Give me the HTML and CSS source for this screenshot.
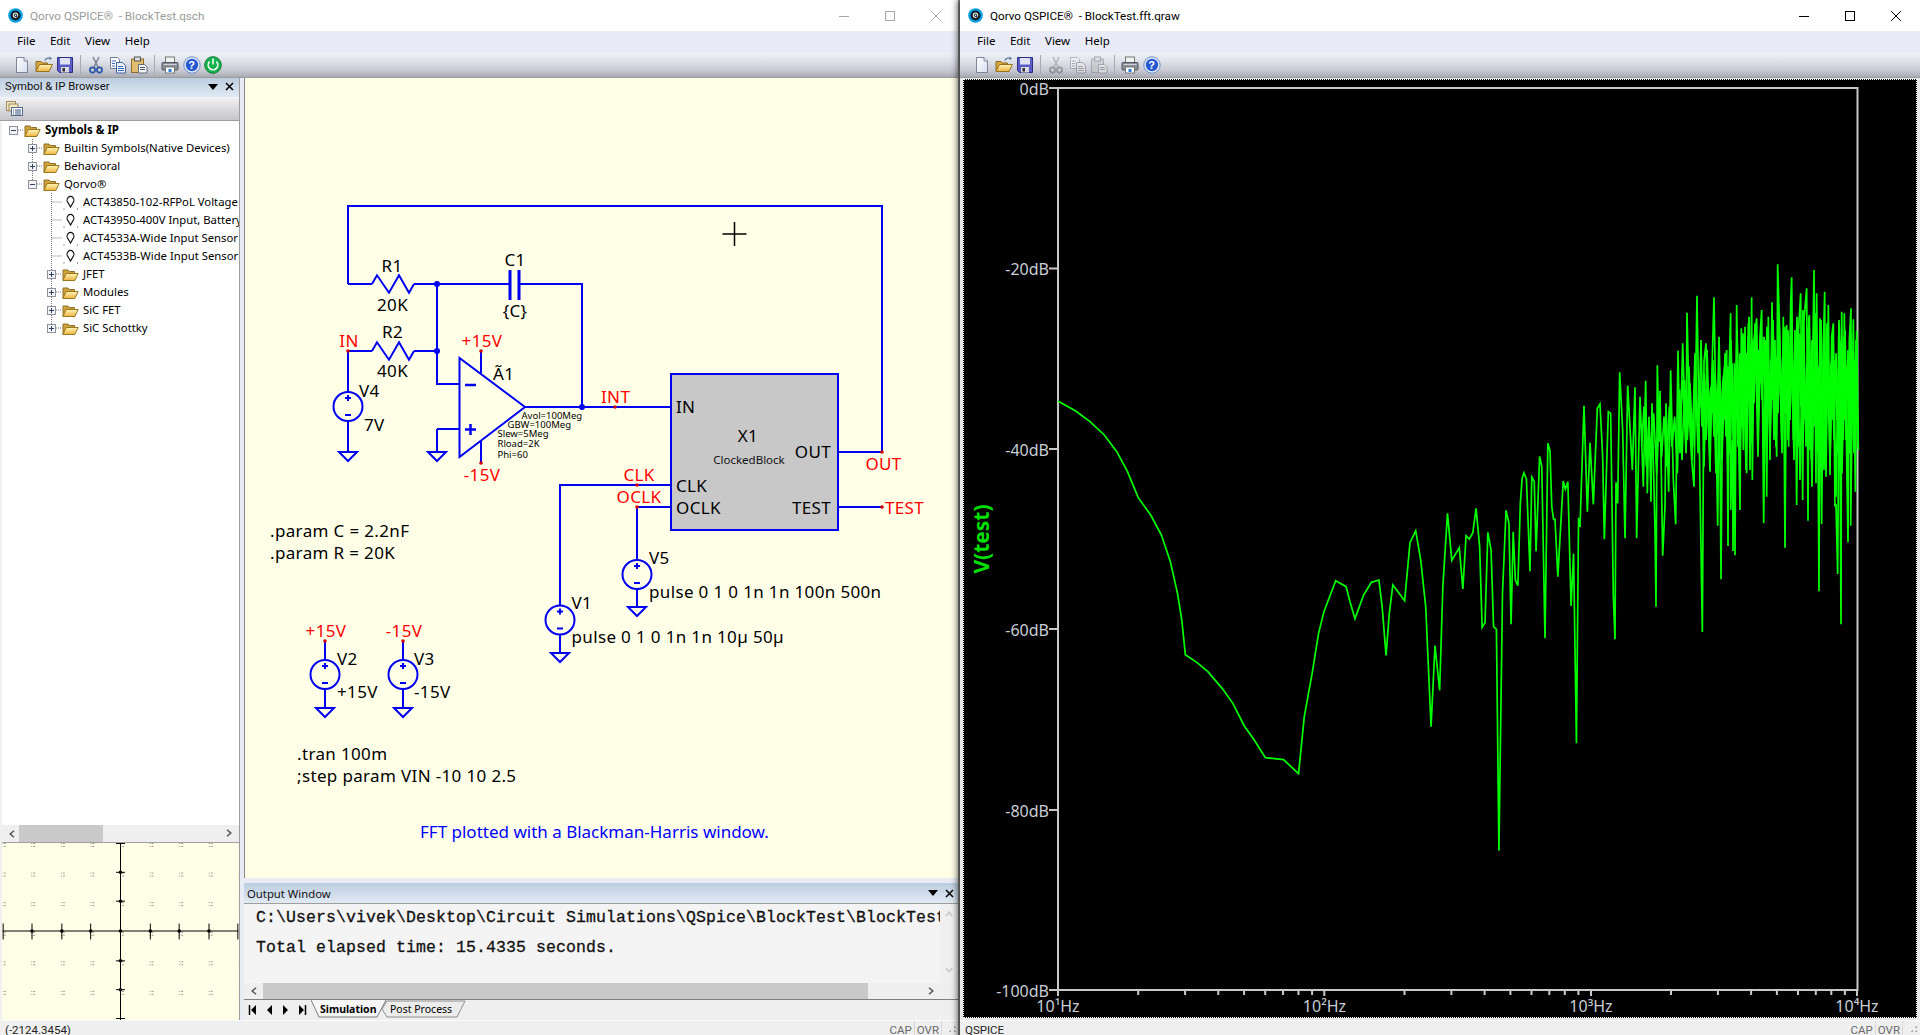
FILE: index.html
```html
<!DOCTYPE html>
<html lang="en">
<head>
<meta charset="utf-8">
<title>Qorvo QSPICE</title>
<link rel="stylesheet" href="styles.css">
</head>
<body>
<svg class="defs" width="0" height="0" aria-hidden="true">
  <defs>
    <linearGradient id="gFolder" x1="0" y1="0" x2="0" y2="1"><stop offset="0" stop-color="#fff4b8"/><stop offset="1" stop-color="#eeb440"/></linearGradient>
    <linearGradient id="gPage" x1="0" y1="0" x2="1" y2="1"><stop offset="0" stop-color="#fff"/><stop offset="1" stop-color="#d8deee"/></linearGradient>
    <symbol id="i-logo" viewBox="0 0 15 15"><circle cx="7.5" cy="7.500" r="7.300" fill="#0a9fe0"/><circle cx="7.500" cy="7.500" r="5" fill="#10222c"/><circle cx="7.500" cy="7.300" r="2.700" fill="#e8eef2"/><circle cx="7.500" cy="7.300" r="1.200" fill="none" stroke="#111" stroke-width="1"/><path d="M8.200 8.200l1.600 1.800" stroke="#111" stroke-width="1.100"/></symbol>
    <symbol id="i-new" viewBox="0 0 18 18"><path d="M3.500 1.500h7.500l3.500 3.500v11.500h-11z" fill="url(#gPage)" stroke="#7d8699"/><path d="M11 1.500v3.500h3.500" fill="#eef" stroke="#7d8699"/></symbol>
    <symbol id="i-open" viewBox="0 0 18 18"><path d="M1 15V5.500h5l1.500 1.500h5v1.500" fill="#d8a83c" stroke="#8c6c20"/><path d="M1 15.500l3.500-7h13l-3.500 7z" fill="url(#gFolder)" stroke="#94721f"/><path d="M10 4.500c.8-2 3-3 5-2.200" fill="none" stroke="#55688a" stroke-width="1.200"/><path d="M14.500.5l2.500 2-2.500 1.500z" fill="#55688a"/></symbol>
    <symbol id="i-save" viewBox="0 0 18 18"><path d="M1.500 1.500h15v15h-13l-2-2z" fill="#5a5cc6" stroke="#2c2d80"/><rect x="4" y="2" width="10" height="6.500" fill="#dfe2f2"/><rect x="5" y="11" width="8" height="5.500" fill="#d9d9e2"/><rect x="6.500" y="12" width="2.500" height="3.500" fill="#333"/></symbol>
    <symbol id="i-cut" viewBox="0 0 18 18"><path d="M6 1l5 10M12 1L7 11" stroke="#7e8794" stroke-width="1.600" fill="none"/><circle cx="5.500" cy="14" r="2.600" fill="none" stroke="#2c56a8" stroke-width="1.700"/><circle cx="12.500" cy="14" r="2.600" fill="none" stroke="#2c56a8" stroke-width="1.700"/></symbol>
    <symbol id="i-copy" viewBox="0 0 18 18"><path d="M1.500 1.500h7l2 2v9h-9z" fill="#fff" stroke="#6f7c92"/><path d="M7.500 6.500h6l3 3v7.500h-9z" fill="#eef2fb" stroke="#44639c"/><path d="M3 5h4M3 7.500h3M3 10h3M9 10.500h5M9 12.500h6M9 14.500h6" stroke="#3d6bb5"/></symbol>
    <symbol id="i-paste" viewBox="0 0 18 18"><rect x="1.500" y="3" width="12" height="13.500" fill="#e1bd6f" stroke="#8a6d2b"/><rect x="4.500" y="1" width="6" height="4" fill="#ddd" stroke="#555"/><path d="M8.500 8.500h6l2.500 2.500v6h-8.500z" fill="#f5f5f8" stroke="#5f6a7e"/><path d="M10 11.500h5M10 13.500h5" stroke="#44546e"/></symbol>
    <symbol id="i-print" viewBox="0 0 18 18"><rect x="4.500" y="1" width="9" height="6" fill="#f2f2f2" stroke="#777"/><rect x="1" y="6.500" width="16" height="7.500" rx="1" fill="#8a8f9a" stroke="#4e535c"/><rect x="4.500" y="11" width="9" height="6" fill="#fff" stroke="#777"/><rect x="7.500" y="13" width="3" height="3" fill="#2b7ed8"/><path d="M2.500 8.500h13" stroke="#cfd3d9"/></symbol>
    <symbol id="i-help" viewBox="0 0 18 18"><circle cx="9" cy="9" r="8.200" fill="#e4ecfa" stroke="#6f8fca"/><circle cx="9" cy="9" r="6.200" fill="#2758d0"/></symbol>
    <symbol id="i-power" viewBox="0 0 18 18"><circle cx="9" cy="9" r="8.300" fill="#16b24c" stroke="#0c7a33"/><path d="M5.600 5.600a4.800 4.800 0 1 0 6.800 0" fill="none" stroke="#fff" stroke-width="1.500"/><path d="M9 2.500v6" stroke="#fff" stroke-width="1.500"/></symbol>
    <symbol id="i-folder" viewBox="0 0 17 13"><path d="M1 12V2h5l1.500 1.500h5v2" fill="#cfa03a" stroke="#8e7028"/><path d="M.8 12.500l3.400-7h12l-3.400 7z" fill="url(#gFolder)" stroke="#97781f"/></symbol>
    <symbol id="i-list" viewBox="0 0 17 15"><rect x=".5" y=".5" width="9" height="9" fill="#f6e7be" stroke="#9a8a64"/><rect x="3" y="3" width="9" height="7" fill="#f6e7be" stroke="#9a8a64"/><rect x="5.500" y="6.500" width="11" height="8" fill="#fff" stroke="#53688a"/><path d="M7 9h1M9 9h6M7 11h1M9 11h6M7 13h1M9 13h6" stroke="#34507e"/></symbol>
    <symbol id="i-plus" viewBox="0 0 9 9"><rect x=".5" y=".5" width="8" height="8" fill="#f3f4f8" stroke="#8c919c"/><path d="M2 4.500h5M4.500 2v5" stroke="#30405c"/></symbol>
    <symbol id="i-minus" viewBox="0 0 9 9"><rect x=".5" y=".5" width="8" height="8" fill="#f3f4f8" stroke="#8c919c"/><path d="M2 4.500h5" stroke="#30405c"/></symbol>
    <symbol id="i-bulb" viewBox="0 0 17 16"><path d="M8.500 13l-2.300-4a3.400 3.800 0 1 1 4.600 0z" fill="#fff" stroke="#111" stroke-width="1.200"/><path d="M1.500 15h1M15 15h1" stroke="#444"/></symbol>
    <symbol id="i-chev-l" viewBox="0 0 8 8"><path d="M6 .8L2.200 4 6 7.200" fill="none" stroke="#555" stroke-width="1.500"/></symbol>
    <symbol id="i-chev-r" viewBox="0 0 8 8"><path d="M2 .8L5.800 4 2 7.200" fill="none" stroke="#555" stroke-width="1.500"/></symbol>
    <symbol id="i-chev-u" viewBox="0 0 8 8"><path d="M.8 6L4 2.200 7.200 6" fill="none" stroke="#c8c8c8" stroke-width="1.500"/></symbol>
    <symbol id="i-chev-d" viewBox="0 0 8 8"><path d="M.8 2L4 5.800 7.200 2" fill="none" stroke="#c8c8c8" stroke-width="1.500"/></symbol>
    <symbol id="i-drop" viewBox="0 0 10 6"><path d="M0 0h10L5 6z" fill="#000"/></symbol>
    <symbol id="i-x" viewBox="0 0 9 9"><path d="M1 1l7 7M8 1L1 8" stroke="#000" stroke-width="1.500"/></symbol>
    <symbol id="w-min" viewBox="0 0 10 10"><path d="M0 5.500h10" stroke="currentColor" fill="none"/></symbol>
    <symbol id="w-max" viewBox="0 0 10 10"><rect x=".5" y=".5" width="9" height="9" stroke="currentColor" fill="none"/></symbol>
    <symbol id="w-close" viewBox="0 0 10 10"><path d="M0 0l10 10M10 0L0 10" stroke="currentColor" fill="none"/></symbol>
    <symbol id="n-first" viewBox="0 0 9 10"><path d="M1.500 0v10" stroke="#000" stroke-width="1.500"/><path d="M8 0v10L3 5z" fill="#000"/></symbol>
    <symbol id="n-prev" viewBox="0 0 9 10"><path d="M7 0v10L2 5z" fill="#000"/></symbol>
    <symbol id="n-next" viewBox="0 0 9 10"><path d="M2 0v10l5-5z" fill="#000"/></symbol>
    <symbol id="n-last" viewBox="0 0 9 10"><path d="M7.500 0v10" stroke="#000" stroke-width="1.500"/><path d="M1 0v10l5-5z" fill="#000"/></symbol>
    <path id="res" d="M0 0l5-8.700 12 17.400 10-17.400 10 17.400 5-8.700" fill="none"/>
    <path id="gnd" d="M-9 0H9L0 9z" fill="none"/>
    <g id="src"><circle r="14.500" fill="none"/><path class="sign" d="M-3-8.500H3M0-11.500v6M-3 8.500H3"/></g>
    <pattern id="gridDots" width="29.750" height="29.750" patternUnits="userSpaceOnUse" patternTransform="translate(-1 0)"><path d="M-.5 0h1v1h-1zM2.500 0h1v1h-1zM-.5 3h1v1h-1zM2.500 3h1v1h-1z" fill="#333"/></pattern>
  </defs>
</svg>

<section class="window win-left">
  <header class="titlebar inactive">
    <svg class="logo"><use href="#i-logo"/></svg>
    <span class="title">Qorvo QSPICE® &nbsp;- BlockTest.qsch</span>
    <span class="controls"><svg class="ctl"><use href="#w-min"/></svg><svg class="ctl"><use href="#w-max"/></svg><svg class="ctl"><use href="#w-close"/></svg></span>
  </header>
  <nav class="menubar"><span>File</span><span>Edit</span><span>View</span><span>Help</span></nav>
  <div class="toolbar">
    <svg class="tool"><use href="#i-new"/></svg><svg class="tool"><use href="#i-open"/></svg><svg class="tool"><use href="#i-save"/></svg>
    <i class="sep"></i>
    <svg class="tool"><use href="#i-cut"/></svg><svg class="tool"><use href="#i-copy"/></svg><svg class="tool"><use href="#i-paste"/></svg>
    <i class="sep"></i>
    <svg class="tool"><use href="#i-print"/></svg>
    <span class="helpbtn"><svg class="tool"><use href="#i-help"/></svg><b>?</b></span>
    <svg class="tool"><use href="#i-power"/></svg>
  </div>
  <div class="main">
    <aside class="sidebar">
      <div class="panelhead"><span>Symbol &amp; IP Browser</span><svg class="pdrop"><use href="#i-drop"/></svg><svg class="px"><use href="#i-x"/></svg></div>
      <div class="paneltools"><svg class="listicon"><use href="#i-list"/></svg></div>
      <div class="tree">
        <svg class="treelines" width="236" height="240"><path d="M16 9H22M30.500 18V63M35 27H41M35 45H41M35 63H41M49.500 72V207M49.500 81H60M49.500 99H60M49.500 117H60M49.500 135H60M54 153H60M54 171H60M54 189H60M54 207H60"/></svg>
        <div class="row l0"><svg class="exp"><use href="#i-minus"/></svg><svg class="folder"><use href="#i-folder"/></svg><b>Symbols &amp; IP</b></div>
        <div class="row l1"><svg class="exp"><use href="#i-plus"/></svg><svg class="folder"><use href="#i-folder"/></svg><span>Builtin Symbols(Native Devices)</span></div>
        <div class="row l1"><svg class="exp"><use href="#i-plus"/></svg><svg class="folder"><use href="#i-folder"/></svg><span>Behavioral</span></div>
        <div class="row l1"><svg class="exp"><use href="#i-minus"/></svg><svg class="folder"><use href="#i-folder"/></svg><span>Qorvo®</span></div>
        <div class="row l2"><i class="noexp"></i><svg class="folder"><use href="#i-bulb"/></svg><span>ACT43850-102-RFPoL Voltage</span></div>
        <div class="row l2"><i class="noexp"></i><svg class="folder"><use href="#i-bulb"/></svg><span>ACT43950-400V Input, Battery</span></div>
        <div class="row l2"><i class="noexp"></i><svg class="folder"><use href="#i-bulb"/></svg><span>ACT4533A-Wide Input Sensor</span></div>
        <div class="row l2"><i class="noexp"></i><svg class="folder"><use href="#i-bulb"/></svg><span>ACT4533B-Wide Input Sensor</span></div>
        <div class="row l2"><svg class="exp"><use href="#i-plus"/></svg><svg class="folder"><use href="#i-folder"/></svg><span>JFET</span></div>
        <div class="row l2"><svg class="exp"><use href="#i-plus"/></svg><svg class="folder"><use href="#i-folder"/></svg><span>Modules</span></div>
        <div class="row l2"><svg class="exp"><use href="#i-plus"/></svg><svg class="folder"><use href="#i-folder"/></svg><span>SiC FET</span></div>
        <div class="row l2"><svg class="exp"><use href="#i-plus"/></svg><svg class="folder"><use href="#i-folder"/></svg><span>SiC Schottky</span></div>
      </div>
      <div class="hscroll side-scroll"><svg class="chev"><use href="#i-chev-l"/></svg><i class="thumb side-thumb"></i><svg class="chev right"><use href="#i-chev-r"/></svg></div>
      <svg class="preview" viewBox="0 0 237 178" width="237" height="178">
        <rect width="237" height="178" fill="url(#gridDots)"/>
        <path class="axis" d="M0 88.500H237M118.500 0V178"/>
        <path class="axis" d="M.5 81V97M29.500 81V97M59.500 81V97M88.500 81V97M148.500 81V97M177.500 81V97M207.500 81V97M236.500 81V97M114 .5H123M114 29.500H123M114 58.500H123M114 118.500H123M114 147.500H123M114 176.500H123"/>
        <g class="axdot"><circle cx="29.500" cy="88.500" r="1.800"/><circle cx="59.500" cy="88.500" r="1.800"/><circle cx="88.500" cy="88.500" r="1.800"/><circle cx="118.500" cy="88.500" r="1.800"/><circle cx="148.500" cy="88.500" r="1.800"/><circle cx="177.500" cy="88.500" r="1.800"/><circle cx="207.500" cy="88.500" r="1.800"/><circle cx="118.500" cy="29.500" r="1.800"/><circle cx="118.500" cy="58.500" r="1.800"/><circle cx="118.500" cy="118.500" r="1.800"/><circle cx="118.500" cy="147.500" r="1.800"/></g>
      </svg>
    </aside>
    <div class="workspace">
      <svg class="schematic" viewBox="245 78 713 800" width="713" height="800">
        <g class="wire">
          <path d="M348 284V206H882V452H838M348 284H372M414 284H510M519 284H582V407M437 284V384H459M348 351H372M414 351H437M348 351V392M348 421V452"/>
          <path d="M481 351V373M481 441V463M437 429V452M459 429H437M525 407H671M838 507H882M671 507H637V560M637 589V607M671 485H560V605M560 635V653M325 641V660M325 689V708M403 641V660M403 689V708"/>
          <use href="#res" x="372" y="284"/><use href="#res" x="372" y="351"/>
          <path class="plate" d="M510 270V300M519 270V300"/>
          <path d="M459.500 358V457L525 407z" fill="none"/>
          <path class="sign2" d="M465 385H476M465 429.500H476M470.500 424V435"/>
          <use href="#gnd" x="348" y="452"/><use href="#gnd" x="437" y="452"/><use href="#gnd" x="637" y="607"/><use href="#gnd" x="560" y="653"/><use href="#gnd" x="325" y="708"/><use href="#gnd" x="403" y="708"/>
          <use href="#src" x="348" y="406.500"/><use href="#src" x="637" y="574.500"/><use href="#src" x="560" y="620"/><use href="#src" x="325" y="674.500"/><use href="#src" x="403" y="674.500"/>
          <rect class="block" x="671" y="374" width="167" height="156"/>
        </g>
        <g class="jdot"><circle cx="437" cy="284" r="3"/><circle cx="437" cy="351" r="3"/><circle cx="582" cy="407" r="3"/></g>
        <g class="ndot"><circle cx="348" cy="351" r="1.800"/><circle cx="481" cy="351" r="1.800"/><circle cx="481" cy="463" r="1.800"/><circle cx="615" cy="407" r="1.800"/><circle cx="882" cy="452" r="1.800"/><circle cx="882" cy="507" r="1.800"/><circle cx="637" cy="507" r="1.800"/><circle cx="637" cy="485" r="1.800"/><circle cx="325" cy="641" r="1.800"/><circle cx="403" cy="641" r="1.800"/></g>
        <path class="cursor" d="M734.500 222V246M722.500 234H746.500"/>
        <g class="lbl">
          <text class="mid" x="392" y="272">R1</text><text class="mid" x="392.500" y="311">20K</text>
          <text class="mid" x="515" y="266">C1</text><text class="mid" x="515" y="317">{C}</text>
          <text class="mid" x="392.500" y="338">R2</text><text class="mid" x="392.500" y="377">40K</text>
          <text x="493" y="380">Ã1</text><text x="359" y="397">V4</text><text x="364" y="431">7V</text>
          <text x="676" y="413">IN</text><text class="mid" x="748" y="442">X1</text>
          <text class="end" x="831" y="458">OUT</text><text x="676" y="492">CLK</text><text x="676" y="513.500">OCLK</text><text class="end" x="831" y="513.500">TEST</text>
          <text x="649" y="564">V5</text><text x="649" y="597.500">pulse 0 1 0 1n 1n 100n 500n</text>
          <text x="571.500" y="609">V1</text><text x="571.500" y="643">pulse 0 1 0 1n 1n 10µ 50µ</text>
          <text x="270" y="537">.param C = 2.2nF</text><text x="270" y="559">.param R = 20K</text>
          <text x="337" y="665">V2</text><text x="337" y="698">+15V</text><text x="414" y="665">V3</text><text x="414" y="698">-15V</text>
          <text x="297" y="760">.tran 100m</text><text x="297" y="782">;step param VIN -10 10 2.5</text>
        </g>
        <g class="red">
          <text class="mid" x="349" y="347">IN</text><text class="mid" x="482" y="347">+15V</text><text class="mid" x="482" y="481">-15V</text>
          <text x="601" y="403">INT</text><text class="mid" x="639" y="481">CLK</text><text class="mid" x="639" y="503">OCLK</text><text class="mid" x="883.500" y="470">OUT</text><text x="885" y="513.500">TEST</text>
          <text class="mid" x="326" y="637">+15V</text><text class="mid" x="404" y="637">-15V</text>
        </g>
        <g class="tiny">
          <text x="521.500" y="419">Avol=100Meg</text><text x="507.500" y="428">GBW=100Meg</text><text x="497.500" y="436.500">Slew=5Meg</text><text x="497.500" y="447">Rload=2K</text><text x="497.500" y="457.500">Phi=60</text>
        </g>
        <text class="blocksub" x="749" y="463.500">ClockedBlock</text>
        <text class="note" x="420" y="837.500">FFT plotted with a Blackman-Harris window.</text>
      </svg>
      <div class="output">
        <div class="panelhead outhead"><span>Output Window</span><svg class="pdrop"><use href="#i-drop"/></svg><svg class="px"><use href="#i-x"/></svg></div>
        <div class="outbody">
          <div class="outtext"><p>C:\Users\vivek\Desktop\Circuit Simulations\QSpice\BlockTest\BlockTest</p><p>Total elapsed time: 15.4335 seconds.</p></div>
          <div class="vscroll"><svg class="chev"><use href="#i-chev-u"/></svg><svg class="chev"><use href="#i-chev-d"/></svg></div>
        </div>
        <div class="hscroll out-scroll"><svg class="chev"><use href="#i-chev-l"/></svg><i class="thumb out-thumb"></i><svg class="chev right"><use href="#i-chev-r"/></svg></div>
        <div class="tabbar">
          <svg class="nav"><use href="#n-first"/></svg><svg class="nav"><use href="#n-prev"/></svg><svg class="nav"><use href="#n-next"/></svg><svg class="nav"><use href="#n-last"/></svg>
          <svg class="tabs" width="170" height="19">
            <path class="tab2" d="M76 1H154L146 17H76l-5-8z"/>
            <path class="tab1" d="M0 0L8 17H66L75 0"/>
            <text class="tabon" x="9" y="13">Simulation</text>
            <text class="taboff" x="79" y="13">Post Process</text>
          </svg>
        </div>
      </div>
    </div>
  </div>
  <footer class="status"><span class="stat-main">(-2124.3454)</span><span class="cell">CAP</span><span class="cell">OVR</span><i class="grip"></i></footer>
</section>

<section class="window win-right">
  <header class="titlebar">
    <svg class="logo"><use href="#i-logo"/></svg>
    <span class="title">Qorvo QSPICE® &nbsp;- BlockTest.fft.qraw</span>
    <span class="controls"><svg class="ctl"><use href="#w-min"/></svg><svg class="ctl"><use href="#w-max"/></svg><svg class="ctl"><use href="#w-close"/></svg></span>
  </header>
  <nav class="menubar"><span>File</span><span>Edit</span><span>View</span><span>Help</span></nav>
  <div class="toolbar">
    <svg class="tool"><use href="#i-new"/></svg><svg class="tool"><use href="#i-open"/></svg><svg class="tool"><use href="#i-save"/></svg>
    <i class="sep"></i>
    <svg class="tool off"><use href="#i-cut"/></svg><svg class="tool off"><use href="#i-copy"/></svg><svg class="tool off"><use href="#i-paste"/></svg>
    <i class="sep"></i>
    <svg class="tool"><use href="#i-print"/></svg>
    <span class="helpbtn"><svg class="tool"><use href="#i-help"/></svg><b>?</b></span>
  </div>
  <div class="plotwrap">
    <svg class="plot" viewBox="963 79 954 939" width="954" height="939">
      <rect class="frame" x="1058" y="88" width="799.500" height="902"/>
      <path class="tick" d="M1049 88H1058M1049 268.500H1058M1049 449H1058M1049 629H1058M1049 810H1058M1049 990H1058"/>
      <path class="tick" d="M1058 990V996M1138.200 990V995M1185.100 990V995M1218.300 990V995M1244.100 990V995M1265.200 990V995M1283 990V995M1298.500 990V995M1312.100 990V995M1324.300 990V996M1404.500 990V995M1451.400 990V995M1484.600 990V995M1510.400 990V995M1531.500 990V995M1549.300 990V995M1564.800 990V995M1578.400 990V995M1591 990V996M1671 990V995M1717.900 990V995M1751.100 990V995M1776.900 990V995M1798 990V995M1815.800 990V995M1831.300 990V995M1844.900 990V995M1857 990V996"/>
      <g class="axlabel">
        <text x="1049" y="95">0dB</text><text x="1049" y="275">-20dB</text><text x="1049" y="456">-40dB</text><text x="1049" y="636">-60dB</text><text x="1049" y="817">-80dB</text><text x="1049" y="997">-100dB</text>
      </g>
      <g class="xlabel">
        <text x="1058" y="1012">10¹Hz</text><text x="1324.500" y="1012">10²Hz</text><text x="1591" y="1012">10³Hz</text><text x="1857" y="1012">10⁴Hz</text>
      </g>
      <text class="ylabel" transform="translate(989 539) rotate(-90)">V(test)</text>
      <g transform="translate(1040 380) scale(.35714 .33333)">
        <polyline class="trace" points="50,63 100,93 140,125 180,165 215,215 245,275 275,353 310,405 340,465 365,545 385,640 397,720 407,824 440,848 470,875 510,925 540,970 572,1038 600,1080 631,1133 682,1139 724,1181 740,1010 762,880 780,760 795,695 828,602 857,620 868,665 882,716 906,645 928,607 949,600 958,680 969,826 978,700 988,615 1021,662 1036,488 1052,452 1066,540 1080,680 1095,1040 1106,797 1119,931 1128,620 1141,400 1153,541 1174,503 1184,627 1193,467 1202,477 1212,458 1221,385 1231,500 1238,742 1246,728 1254,457 1263,510 1270,740 1278,748 1285,1412 1295,640 1305,391 1313,430 1319,733 1325,455 1331,600 1338,617 1345,370 1350,295 1355,279 1362,297 1372,574 1377,291 1384,305 1389,514 1399,229 1405,260 1414,775 1422,190 1428,213 1433,380 1438,418 1442,418 1450,590 1465,303 1471,328 1478,305 1487,678 1494,521 1502,1090 1508,413 1513,441"/>
      </g>
      <g transform="translate(1580 240) scale(.33333)">
        <polyline class="trace" points="0,860 12,497 22,815 30,608 40,793 52,505 60,492 68,650 73,898 85,515 92,520 100,1068 105,1198 108,727 113,790 119,397 128,570 135,895 143,437 157,690 165,442 170,895 180,470 190,740 197,422 202,760 207,530 213,785 216,490 225,870 228,1100 232,376 237,605 240,452 248,947 255,800 258,490 266,755 272,391 280,720 287,853 294,332 300,640 308,310 318,625 321,218 328,530 335,660 342,740 351,167 360,740 367,1176 372,365 378,310 385,560 390,695 395,425 402,172 413,857 418,380 423,1018 428,430 440,330 444,918 447,400 452,220 452,810 458,600 459,933 463,370 465,946 470,195 476,600 480,810 484,265 490,630 495,260 500,700 505,250 510,690 515,172 517,720 522,300 530,235 535,540 540,290 545,210 551,850 557,300 560,770 565,230 570,660 576,187 582,600 585,300 590,650 593,73 600,310 605,600 610,230 615,923 620,255 626,620 632,190 635,112 640,600 645,270 650,795 655,280 662,160 668,780 672,240 680,145 684,842 688,225 694,660 702,90 708,730 710,160 714,600 717,1054 720,235 725,852 730,330 734,155 738,710 745,195 750,705 755,290 760,250 765,800 768,792 773,1002 778,260 783,1153 785,215 790,600 793,220 800,650 804,907 808,300 813,205 812,857 820,238 826,755 830,272 835,630"/>
        <polyline class="trace" points="360,420 366,560 372,400 378,600 384,430 390,540 396,420 402,590 408,460 414,580 420,430 426,620 432,410 438,590 444,380 450,640 456,370 462,600 468,390 474,620 480,340 486,560 492,310 498,600 504,290 510,470 516,300 522,490 528,280 534,520 540,300 546,480 552,290 558,530 564,340 570,590 576,300 582,540 588,350 594,520 600,320 606,600 612,290 618,520 624,270 630,540 636,310 642,600 648,300 654,620 660,280 666,560 672,300 678,590 684,260 690,630 696,300 702,560 708,280 714,600 720,300 726,640 732,330 738,600 744,300 750,680 756,320 762,600 768,340 774,640 780,300 786,620 792,290 798,600 804,330 810,640 816,340 822,560 828,300 834,620"/>
        <polyline class="trace" points="363,500 369,440 375,540 381,450 387,500 393,440 399,520 405,400 411,510 417,440 423,560 429,420 435,540 441,400 447,560 453,420 459,580 465,380 471,540 477,400 483,520 489,370 495,540 501,340 507,480 513,320 519,430 525,350 531,440 537,330 543,430 549,350 555,460 561,360 567,500 573,360 579,480 585,380 591,520 597,340 603,500 609,340 615,520 621,360 627,500 633,350 639,520 645,340 651,540 657,360 663,500 669,340 675,540 681,370 687,520 693,360 699,530 705,370 711,540 717,380 723,520 729,380 735,540 741,360 747,550 753,370 759,540 765,360 771,540 777,370 783,520 789,360 795,540 801,380 807,560 813,370 819,540 825,360 831,560"/>
        <polyline class="trace" points="300,560 309,420 318,640 327,380 336,660 345,340 354,640 363,300 372,680 381,330 390,620 399,360 408,700 417,290 426,660 435,340 444,700 453,300 462,720 471,270 480,650 489,280 498,690 507,230 516,610 525,250 534,650 543,250 552,640 561,260 570,610 579,240 588,620 597,220 606,640 615,260 624,600 633,240 642,660 651,230 660,720 669,210 678,620 687,230 696,740 705,220 714,640 723,240 732,690 741,250 750,640 759,280 768,770 777,240 786,700 795,270 804,680 813,280 822,640 831,300"/>
        <polyline class="trace" points="185,620 192,500 199,680 206,560 214,640 221,520 230,700 238,520 245,650 252,530 260,680 268,500 276,620 284,530 292,700 299,450 306,660 314,420 322,600 330,430 338,620 346,350 354,600"/>
      </g>
    </svg>
  </div>
  <footer class="status"><span class="stat-main">QSPICE</span><span class="cell">CAP</span><span class="cell">OVR</span><i class="grip"></i></footer>
</section>
</body>
</html>
```
FILE: styles.css
```css
html, body { margin: 0; padding: 0; height: 1035px; overflow: hidden; }
body {
  display: flex; width: 1920px; background: #8f8f8f;
  font-family: "Noto Sans", "Open Sans", sans-serif; font-size: 12px; color: #000;
}
.defs { position: absolute; }
svg { display: block; flex: none; }

.window { display: flex; flex-direction: column; height: 1042px; background: #f0f0f0; }
.win-left { width: 958px; margin-right: 2px; }
.win-right { width: 960px; position: relative; box-shadow: -3px 0 6px rgba(0,0,0,.55); }

.titlebar { display: flex; align-items: center; height: 31px; flex: none; background: #fff; padding-left: 7.500px; }
.logo { width: 15px; height: 15px; margin-right: 7.500px; }
.title { font: 11.700px/30px Roboto, "Noto Sans", sans-serif; color: #000; }
.inactive .title { color: #9a9a9a; }
.controls { margin-left: auto; display: flex; color: #000; margin-right: -1px; }
.inactive .controls { color: #a6a6a6; }
.win-right .controls { margin-right: 1px; }
.ctl { width: 10px; height: 10px; margin: 0 18px; }

.menubar { display: flex; gap: 14.500px; height: 22px; flex: none; background: #e9ecf8; padding-left: 17px; line-height: 20px; font-size: 11.500px; }

.toolbar {
  display: flex; align-items: center; height: 25px; flex: none; padding: 0 0 1px 11px;
  background: linear-gradient(#eef0f8 0, #e2e4ec 30%, #c6c7d0 75%, #a9abb4 100%);
  border-bottom: 1px solid #9c9c9c; box-sizing: border-box;
}
.tool { width: 18px; height: 18px; margin: 0 1.850px; }
.tool.off { filter: grayscale(1) opacity(.45); }
.sep { display: block; width: 1px; height: 19px; margin: 0 4px; background: #a8a8b0; }
.helpbtn { position: relative; display: block; }
.helpbtn b { position: absolute; left: 0; right: 0; top: 2px; text-align: center; color: #fff; font: bold 11px/14px "Liberation Sans", sans-serif; }

.main { flex: 1; display: flex; min-height: 0; }
.sidebar { width: 239px; flex: none; display: flex; flex-direction: column; border-right: 1px solid #9e9e9e; }
.panelhead {
  display: flex; align-items: center; height: 19px; flex: none; padding: 0 0 2px 5px; box-sizing: border-box;
  font: 11.300px Roboto, "Noto Sans", sans-serif;
  background: linear-gradient(#bccde0, #e1eaf3); color: #111;
}
.pdrop { width: 10px; height: 6px; margin-left: auto; }
.px { width: 9px; height: 9px; margin: 0 5px 0 7px; }
.paneltools { height: 24px; flex: none; box-sizing: border-box; padding: 4px 0 0 6px; background: linear-gradient(#f3f3f5, #c5c5ca); border-bottom: 1px solid #9e9e9e; }
.listicon { width: 17px; height: 15px; }

.tree { position: relative; flex: 1; min-height: 0; background: #fff; margin-left: 2px; overflow: hidden; }
.treelines { position: absolute; left: 0; top: 0; }
.treelines path { fill: none; stroke: #777; stroke-width: 1; stroke-dasharray: 1 1; }
.row { position: relative; display: flex; align-items: center; height: 18px; white-space: nowrap; font-size: 11.300px; line-height: 18px; }
.row b { font-size: 11.500px; font-weight: 700; }
.l0 { padding-left: 7px; }
.l1 { padding-left: 26px; }
.l2 { padding-left: 45px; }
.exp, .noexp { display: block; width: 9px; height: 9px; margin-right: 6px; flex: none; }
.folder { width: 17px; height: 13px; margin-right: 4px; }
.l2 .noexp + .folder { height: 16px; }

.hscroll { position: relative; display: flex; align-items: center; flex: none; background: #efefef; }
.side-scroll { height: 17px; margin-left: 2px; }
.chev { width: 8px; height: 8px; margin-left: 6px; }
.chev.right { position: absolute; right: 6px; top: 4px; margin: 0; }
.thumb { display: block; height: 100%; background: #c9c9c9; }
.side-thumb { width: 84px; margin-left: 3px; }
.preview { background: #ffffe8; margin-left: 2px; border-top: 1px solid #a0a0a0; box-sizing: content-box; height: 177px; }
.axis { fill: none; stroke: #000; stroke-width: 1; }
.axdot circle { fill: #000; }

.workspace { flex: 1; min-width: 0; display: flex; flex-direction: column; padding-left: 4px; background: #e9ebf5; }
.schematic { width: 713px; height: 800px; flex: none; background: #ffffe8; border-left: 1px solid #8a8a8a; box-sizing: content-box; }
.wire path, .wire use, .wire rect { stroke: #0000f0; stroke-width: 2; fill: none; }
.wire path.plate { stroke-width: 3; }
.wire .sign2 { stroke-width: 2.500; }
.wire .block { fill: #c8c8c8; }
.sign { stroke-width: 2; }
.jdot circle { fill: #0000f0; }
.ndot circle { fill: #d00000; }
.cursor { stroke: #000; stroke-width: 1.500; fill: none; }
.lbl text, .red text { font-size: 17px; letter-spacing: .35px; fill: #000; }
.red text { fill: #ff0000; }
.mid { text-anchor: middle; }
.end { text-anchor: end; }
.tiny text { font-size: 9.500px; fill: #000; }
.blocksub { font-size: 11.500px; text-anchor: middle; fill: #111; }
.note { font-size: 17px; fill: #0000ff; }

.output { margin-top: 5px; flex: 1; min-height: 0; display: flex; flex-direction: column; }
.outhead { height: 20px; padding: 0 0 0 3px; font: 11.300px "Noto Sans", sans-serif; }
.outhead .px { margin-right: 4px; }
.outbody { display: flex; height: 80px; flex: none; border-top: 1px solid #9e9e9e; background: #f4f4f4; box-sizing: border-box; }
.outtext { flex: 1; min-width: 0; overflow: hidden; padding: 0 0 0 12px; font: 16.500px/28px "Liberation Mono", monospace; letter-spacing: .1px; white-space: nowrap; color: #111; -webkit-text-stroke: .3px #111; }
.outtext p { margin: 0 0 2px; }
.vscroll { width: 18px; flex: none; display: flex; flex-direction: column; justify-content: space-between; align-items: center; padding: 6px 0 9px; box-sizing: border-box; background: #f0f0f0; }
.vscroll .chev { margin: 0; }
.out-scroll { height: 16px; border-bottom: 1px solid #7f7f7f; }
.out-thumb { width: 605px; margin-left: 5px; }
.out-scroll .chev.right { right: 23px; top: 4px; }
.tabbar { display: flex; align-items: center; flex: 1; padding: 0 0 4px 4px; background: #efefef; }
.nav { width: 9px; height: 10px; margin-right: 7.500px; }
.tabs { margin-left: -3px; }
.tab1 { fill: #f6f6f6; stroke: #7f7f7f; }
.tab2 { fill: #ececec; stroke: #8f8f8f; }
.tabon { font-size: 10.500px; font-weight: 700; }
.taboff { font-size: 10.500px; }

.plotwrap { flex: 1; min-height: 0; padding: 1px 3px 2px 3px; background: #e8e8e8; }
.plot { background: #000; outline: 1px dotted #fff; outline-offset: -1px; }
.frame { fill: none; stroke: #c8c8c8; stroke-width: 2; }
.tick { fill: none; stroke: #c8c8c8; stroke-width: 2; }
.axlabel text { fill: #c8ced6; font-size: 16px; text-anchor: end; }
.xlabel text { fill: #c8ced6; font-size: 16px; text-anchor: middle; }
.ylabel { fill: #00e000; font-size: 21px; font-weight: 700; text-anchor: middle; }
.trace { fill: none; stroke: #00ff00; stroke-width: 1.700; vector-effect: non-scaling-stroke; }

.status { display: flex; align-items: flex-start; height: 22px; flex: none; box-sizing: border-box; border-top: 1px solid #fbfbfb; background: #efefef; font: 11.500px/19px Roboto, "Noto Sans", sans-serif; color: #222; padding-left: 5px; }
.stat-main { margin-right: auto; }
.cell { color: #6a6a6a; padding: 0 2px; height: 22px; border-right: 1px solid #d8d8d8; }
.grip { display: block; width: 16px; height: 14px; background:
  radial-gradient(circle, #aaa 0 1px, transparent 1px) right 2px top 5px / 3px 3px no-repeat,
  radial-gradient(circle, #aaa 0 1px, transparent 1px) right 2px top 9px / 3px 3px no-repeat,
  radial-gradient(circle, #aaa 0 1px, transparent 1px) right 6px top 9px / 3px 3px no-repeat; }
.win-right .grip { width: 17px; }
```
